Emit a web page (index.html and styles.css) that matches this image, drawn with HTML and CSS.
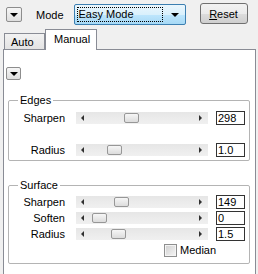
FILE: index.html
```html
<!DOCTYPE html>
<html lang="en">
<head>
  <meta charset="UTF-8">
  <title>Sharpen Settings</title>
  <link rel="stylesheet" href="styles.css">
</head>
<body>
  <div class="topbar">
    <button class="drop-btn"><span class="tri-down"></span></button>
    <span class="mode-label">Mode</span>
    <div class="combo">
      <span class="combo-text">Easy Mode</span>
      <span class="tri-down"></span>
    </div>
    <button class="reset-btn"><u>R</u>eset</button>
  </div>

  <div class="tabs">
    <div class="tab">Auto</div>
    <div class="tab active">Manual</div>
  </div>

  <div class="panel">
    <button class="drop-btn small"><span class="tri-down"></span></button>

    <fieldset class="group">
      <legend>Edges</legend>
      <div class="row">
        <span class="lbl">Sharpen</span>
        <div class="slider"><span class="arr-l"></span><span class="thumb" style="left: 48px"></span><span class="arr-r"></span></div>
        <input class="num" type="text" value="298">
      </div>
      <div class="row"></div>
      <div class="row">
        <span class="lbl">Radius</span>
        <div class="slider"><span class="arr-l"></span><span class="thumb" style="left: 31px"></span><span class="arr-r"></span></div>
        <input class="num" type="text" value="1.0">
      </div>
    </fieldset>

    <fieldset class="group surface">
      <legend>Surface</legend>
      <div class="row">
        <span class="lbl">Sharpen</span>
        <div class="slider"><span class="arr-l"></span><span class="thumb" style="left: 38px"></span><span class="arr-r"></span></div>
        <input class="num" type="text" value="149">
      </div>
      <div class="row">
        <span class="lbl">Soften</span>
        <div class="slider"><span class="arr-l"></span><span class="thumb" style="left: 16px"></span><span class="arr-r"></span></div>
        <input class="num" type="text" value="0">
      </div>
      <div class="row">
        <span class="lbl">Radius</span>
        <div class="slider"><span class="arr-l"></span><span class="thumb" style="left: 35px"></span><span class="arr-r"></span></div>
        <input class="num" type="text" value="1.5">
      </div>
      <div class="check-row">
        <span class="check"></span>
        <span>Median</span>
      </div>
    </fieldset>
  </div>
</body>
</html>
```

FILE: styles.css
```css
body {
  margin: 0;
  background: #f0f0f0;
  font-family: "Liberation Sans", Arial, sans-serif;
  font-size: 11px;
  color: #000;
  height: 274px;
  overflow: hidden;
}
.topbar {
  display: flex;
  align-items: flex-start;
  height: 29px;
  padding-left: 6px;
}
.drop-btn {
  width: 16px;
  height: 15px;
  margin: 7px 0 0 0;
  padding: 0;
  border: 1px solid #8d8d8d;
  border-radius: 2px;
  background: linear-gradient(#f6f6f6, #dedede);
  display: flex;
  align-items: center;
  justify-content: center;
}
.drop-btn.small {
  width: 15px;
  height: 13px;
  margin: 17px 0 0 2px;
}
.tri-down {
  width: 0;
  height: 0;
  border-left: 4px solid transparent;
  border-right: 4px solid transparent;
  border-top: 4px solid #000;
}
.mode-label {
  margin: 9px 0 0 14px;
  line-height: 13px;
}
.combo {
  box-sizing: border-box;
  width: 112px;
  height: 21px;
  margin: 4px 0 0 10px;
  border: 1px solid #3c7fb1;
  border-radius: 2px;
  background: linear-gradient(#eaf6fd 0%, #d9f0fc 50%, #bee6fd 51%, #a7d9f5 100%);
  display: flex;
  align-items: center;
  padding: 0 6px 0 2px;
}
.combo-text {
  flex: 1;
  height: 13px;
  line-height: 13px;
  border: 1px dotted #000;
  padding-left: 1px;
}
.combo .tri-down {
  margin-left: 8px;
}
.reset-btn {
  box-sizing: border-box;
  width: 48px;
  height: 21px;
  margin: 3px 0 0 14px;
  padding: 0;
  border: 1px solid #707070;
  border-radius: 3px;
  background: linear-gradient(#f2f2f2 0%, #ebebeb 50%, #dddddd 51%, #cfcfcf 100%);
  font: inherit;
  color: #000;
}
.tabs {
  display: flex;
  align-items: flex-end;
  padding-left: 4px;
  height: 20px;
  position: relative;
  z-index: 1;
}
.tab {
  box-sizing: border-box;
  height: 16px;
  width: 41px;
  border: 1px solid #898c95;
  border-bottom: none;
  background: linear-gradient(#f2f2f2, #e3e3e3);
  padding: 2px 0 0 6px;
  line-height: 13px;
}
.tab.active {
  height: 21px;
  width: 52px;
  margin-bottom: -1px;
  background: #fff;
  padding: 3px 0 0 8px;
}
.panel {
  box-sizing: border-box;
  margin-left: 3px;
  width: 253px;
  height: 230px;
  border: 1px solid #898c95;
  border-bottom: none;
  background: #fff;
  display: flex;
  flex-direction: column;
  align-items: flex-start;
}
.group {
  box-sizing: border-box;
  width: 242px;
  margin: 14px 0 0 4px;
  padding: 3px 0 2px 0;
  border: 1px solid #b4b4b4;
  border-radius: 2px;
  min-width: 0;
}
.group.surface {
  margin-top: 18px;
  padding-top: 2px;
  padding-bottom: 5px;
}
.group legend {
  margin-left: 9px;
  padding: 0 2px;
  line-height: 13px;
}
.row {
  display: grid;
  grid-template-columns: 56px 133px 29px;
  column-gap: 10px;
  align-items: center;
  height: 16px;
}
.row .slider {
  margin-left: 1px;
}
.row .num {
  margin-left: -2px;
}
.lbl {
  text-align: right;
}
.slider {
  position: relative;
  height: 12px;
  background: linear-gradient(#e6e6e6, #f0f0f0);
}
.arr-l, .arr-r {
  position: absolute;
  top: 3px;
  width: 0;
  height: 0;
  border-top: 3px solid transparent;
  border-bottom: 3px solid transparent;
}
.arr-l {
  left: 5px;
  border-right: 3px solid #303030;
}
.arr-r {
  right: 6px;
  border-left: 3px solid #303030;
}
.thumb {
  position: absolute;
  top: 1px;
  box-sizing: border-box;
  width: 15px;
  height: 10px;
  border: 1px solid #979797;
  border-radius: 2px;
  background: linear-gradient(#f6f6f6, #dcdcdc);
}
.num {
  box-sizing: border-box;
  width: 29px;
  height: 14px;
  padding: 0 0 0 1px;
  border: 1px solid #333;
  font: inherit;
  line-height: 12px;
  background: #fff;
}
.check-row {
  display: flex;
  align-items: center;
  gap: 3px;
  height: 16px;
  padding-left: 155px;
}
.check {
  box-sizing: border-box;
  width: 13px;
  height: 13px;
  border: 1px solid #8e8f8f;
  background: linear-gradient(135deg, #cfcfcf, #f6f6f6);
  box-shadow: inset 0 0 0 1px #f4f4f4;
}
```
